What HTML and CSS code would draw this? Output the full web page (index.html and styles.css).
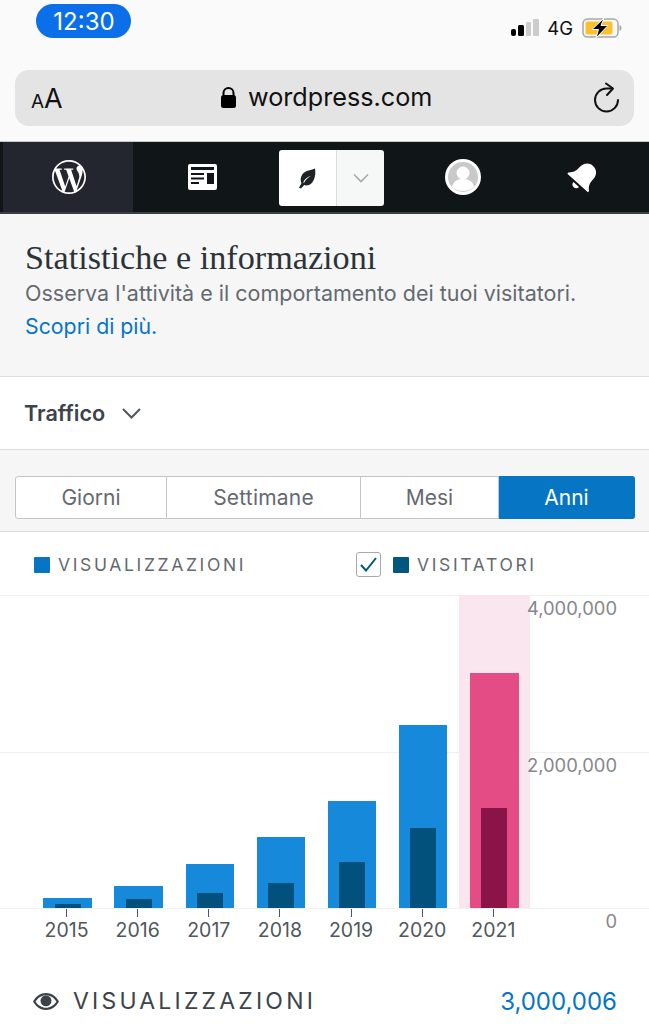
FILE: index.html
```html
<!DOCTYPE html>
<html lang="it">
<head>
<meta charset="utf-8">
<title>Statistiche e informazioni</title>
<link rel="stylesheet" href="styles.css">
</head>
<body>
<header class="chrome">
  <div class="status">
    <span class="time">12:30</span>
    <div class="status-right">
      <svg class="signal" width="28" height="18" viewBox="0 0 28 18"><rect x="0" y="10" width="5" height="7" rx="2" fill="#000"/><rect x="7" y="6" width="6" height="11" rx="1.500" fill="#000"/><rect x="15" y="3" width="5" height="14" rx="1" fill="#ccc"/><rect x="22" y="0" width="6" height="17" rx="1" fill="#ccc"/></svg>
      <span class="net">4G</span>
      <svg class="battery" width="40" height="20" viewBox="0 0 40 20"><rect x="1" y="1" width="35" height="18" rx="4.500" fill="none" stroke="#a8a8a8" stroke-width="1.500"/><rect x="3.500" y="3.500" width="27" height="13" rx="2" fill="#fbc02d"/><path d="M37.500 7v6c1.300-.4 2-1.500 2-3s-.7-2.600-2-3z" fill="#a8a8a8"/><path d="M22 0 10 11.500h6.500L14 20 26 7.500h-7z" fill="#000" stroke="#fafafa" stroke-width="1"/></svg>
    </div>
  </div>
  <div class="urlbar">
    <span class="aa"><span class="aa-small">A</span>A</span>
    <span class="domain">
      <svg class="lock" width="15" height="21" viewBox="0 0 15 21"><path d="M2.500 9V6a5 5 0 0 1 10 0v3" fill="none" stroke="#000" stroke-width="2"/><rect x="0" y="8" width="15" height="13" rx="2.500" fill="#000"/></svg>
      wordpress.com
    </span>
    <svg class="reload" width="27" height="32" viewBox="0 0 27 32"><path d="M18 6.500H12.500A11.500 11.500 0 1 0 24 18" fill="none" stroke="#111" stroke-width="2" stroke-linecap="round"/><path d="M12 1.500 19 6.500 13 13" fill="none" stroke="#111" stroke-width="2" stroke-linecap="round" stroke-linejoin="round"/></svg>
  </div>
</header>

<nav class="topnav">
  <div class="nav-item nav-active">
    <svg width="34" height="34" viewBox="2 2 20 20"><path fill="#fff" d="M12 2C6.486 2 2 6.486 2 12s4.486 10 10 10 10-4.486 10-10S17.514 2 12 2zM3.010 12c0-1.302.28-2.540.78-3.660l4.290 11.760C5.080 18.640 3.010 15.560 3.010 12zm8.990 8.990c-.88 0-1.730-.13-2.540-.37l2.700-7.840 2.760 7.570c.02.04.04.09.06.12-.93.33-1.930.52-2.980.52zm1.240-13.200c.54-.03 1.030-.09 1.030-.09.48-.06.43-.77-.06-.74 0 0-1.460.11-2.400.11-.88 0-2.370-.11-2.370-.11-.48-.03-.54.71-.06.74 0 0 .46.06.95.09l1.410 3.870-1.980 5.940-3.300-9.810c.55-.03 1.040-.09 1.040-.09.49-.06.43-.77-.06-.74 0 0-1.460.11-2.400.11-.17 0-.37 0-.58-.01C6.070 4.430 8.870 3.010 12 3.010c2.340 0 4.460.89 6.060 2.350-.04 0-.08-.01-.12-.01-.88 0-1.510.77-1.510 1.600 0 .74.43 1.370.88 2.110.34.6.74 1.370.74 2.480 0 .77-.3 1.660-.69 2.910l-.9 3.010-3.220-9.670zm3.280 11.990 2.750-7.950c.51-1.280.68-2.300.68-3.210 0-.33-.02-.64-.06-.92.7 1.290 1.100 2.760 1.100 4.320 0 3.320-1.800 6.210-4.470 7.760z"/></svg>
  </div>
  <div class="nav-item nav-reader">
    <svg width="29" height="26" viewBox="0 0 29 26"><path fill="#fff" fill-rule="evenodd" d="M2 0h25a2 2 0 0 1 2 2v22a2 2 0 0 1-2 2H2a2 2 0 0 1-2-2V2a2 2 0 0 1 2-2zM3 3v3h23V3zM3 9v2h13V9zM3 13.500v2h13v-2zM3 18v2h8v-2zM19 9v11h7V9z"/></svg>
  </div>
  <div class="site-btn">
    <span class="site-main">
      <svg class="leaf" width="18" height="21" viewBox="0 0 18 21"><path fill="#1d2327" fill-rule="evenodd" d="M17 .5c1 5.800-.3 11.600-3.500 14.700-2.300 2.200-4.800 2.700-7.300 1.900L3 20.500 1 19.700l2.500-4.500C1.800 11.500 3 6.800 6.500 4.200 9.500 2.200 13.500 2 17 .5zM6 15c1.600-3 3.800-5.200 7-7.200-3.600 1-6.300 3.400-7.800 6.600z"/></svg>
    </span>
    <span class="site-more">
      <svg width="16" height="10" viewBox="0 0 16 10"><path d="M1 1.500 8 8.500 15 1.500" fill="none" stroke="#a7aaad" stroke-width="1.600"/></svg>
    </span>
  </div>
  <div class="nav-item nav-me">
    <svg width="36" height="36" viewBox="0 0 36 36"><circle cx="18" cy="18" r="18" fill="#fff"/><circle cx="18" cy="18" r="15" fill="#c9c9c9"/><circle cx="18" cy="14" r="6.500" fill="#fff"/><path d="M7 28c1-5.500 5-8 11-8s10 2.500 11 8c-3 2.400-6.800 4-11 4s-8-1.600-11-4z" fill="#fff"/></svg>
  </div>
  <div class="nav-item nav-bell">
    <svg width="32" height="32" viewBox="0 0 30 30"><g fill="#fff" transform="rotate(42 15 15)"><path d="M15 1c5.500 0 8.500 4 8.500 9.500 0 5 1 7.500 4.500 10.500v1.500H2V21c3.500-3 4.500-5.500 4.500-10.500C6.500 5 9.500 1 15 1z"/><path d="M11.500 24.500h7c0 2.200-1.500 3.500-3.500 3.500s-3.500-1.300-3.500-3.500z"/></g></svg>
  </div>
</nav>

<section class="intro">
  <h1 class="title">Statistiche e informazioni</h1>
  <p class="sub">Osserva l'attività e il comportamento dei tuoi visitatori.</p>
  <a class="more" href="#">Scopri di più.</a>
</section>

<div class="traffic">
  <span>Traffico</span>
  <svg width="19" height="11" viewBox="0 0 19 11"><path d="M1 1 9.500 9.500 18 1" fill="none" stroke="#50575e" stroke-width="2"/></svg>
</div>

<div class="period">
  <div class="tabs">
    <span class="tab tab-days">Giorni</span>
    <span class="tab tab-weeks">Settimane</span>
    <span class="tab tab-months">Mesi</span>
    <span class="tab tab-years">Anni</span>
  </div>
</div>

<main class="panel">
  <div class="legend">
    <span class="key key-views"></span>
    <span class="legend-label legend-views">VISUALIZZAZIONI</span>
    <span class="check">
      <svg width="17" height="15" viewBox="0 0 17 15"><path d="M1 8 6 13.500 16 1" fill="none" stroke="#02577e" stroke-width="2"/></svg>
    </span>
    <span class="key key-visitors"></span>
    <span class="legend-label">VISITATORI</span>
  </div>

  <div class="chart">
    <div class="gridlines"><i></i><i></i><i></i></div>
    <div class="plot">
      <div class="col"><div class="bar" style="height:10px"><div class="inner" style="height:4px"></div></div></div>
      <div class="col"><div class="bar" style="height:22px"><div class="inner" style="height:9px"></div></div></div>
      <div class="col"><div class="bar" style="height:44px"><div class="inner" style="height:15px"></div></div></div>
      <div class="col"><div class="bar" style="height:71px"><div class="inner" style="height:25px"></div></div></div>
      <div class="col"><div class="bar" style="height:107px"><div class="inner" style="height:46px"></div></div></div>
      <div class="col"><div class="bar" style="height:183px"><div class="inner" style="height:80px"></div></div></div>
      <div class="col col-on"><div class="bar" style="height:235px"><div class="inner" style="height:100px"></div></div></div>
    </div>
    <div class="years">
      <span class="year">2015</span><span class="year">2016</span><span class="year">2017</span><span class="year">2018</span><span class="year">2019</span><span class="year">2020</span><span class="year">2021</span>
    </div>
    <div class="axis"><span>4,000,000</span><span>2,000,000</span><span>0</span></div>
  </div>

  <div class="total">
    <svg width="26" height="17" viewBox="0 0 26 17"><path fill="#3c434a" fill-rule="evenodd" d="M13 0c5.500 0 10.200 3.300 13 8.500C23.200 13.700 18.500 17 13 17S2.800 13.700 0 8.500C2.800 3.300 7.500 0 13 0zm0 2.200c-4.200 0-7.900 2.400-10.400 6.300 2.500 3.900 6.200 6.300 10.400 6.300s7.900-2.400 10.400-6.300C20.900 4.600 17.200 2.200 13 2.200z"/><circle cx="13" cy="7.800" r="5.500" fill="#3c434a"/></svg>
    <span class="total-label">VISUALIZZAZIONI</span>
    <span class="total-value">3,000,006</span>
  </div>
</main>
</body>
</html>
```

FILE: styles.css
```css
* { box-sizing: border-box; }
html, body { margin: 0; padding: 0; }
body {
  width: 649px;
  height: 1024px;
  overflow: hidden;
  background: #fff;
  font-family: Inter, "Liberation Sans", sans-serif;
  color: #50575e;
}

.chrome {
  height: 142px;
  background: #fafafa;
  border-bottom: 1px solid #c8c8c8;
  padding: 4px 15px 0;
}
.status {
  height: 66px;
  display: flex;
  justify-content: space-between;
  align-items: flex-start;
}
.time {
  width: 95px;
  height: 34px;
  margin-left: 21px;
  padding: 1px 0 0 1px;
  border-radius: 17px;
  background: #0a6fe8;
  color: #fff;
  font-size: 24px;
  line-height: 34px;
  text-align: center;
}
.status-right {
  display: flex;
  align-items: center;
  gap: 8px;
  margin-top: 14px;
  margin-right: 12px;
}
.net { font-size: 18.500px; line-height: 20px; color: #111; }
.battery { margin-left: 1px; }

.urlbar {
  height: 56px;
  border-radius: 14px;
  background: #e4e4e4;
  display: flex;
  align-items: center;
  padding: 0 13px 0 16px;
  color: #111;
}
.aa { width: 190px; font-size: 27px; line-height: 1; }
.aa-small { font-size: 19px; }
.domain {
  display: flex;
  align-items: center;
  gap: 12px;
  font-size: 25.200px;
  line-height: 30px;
  padding-bottom: 2px;
  flex: 1;
}

.topnav {
  height: 72px;
  background: #101517;
  border-bottom: 2px solid #3a3f44;
  display: flex;
  padding-left: 3px;
}
.nav-item { display: flex; align-items: center; justify-content: center; }
.nav-active { width: 130px; background: #23262e; padding-left: 1px; }
.nav-reader { width: 138px; }
.site-btn {
  width: 105px;
  height: 56px;
  margin: 8px 8px 0;
  display: flex;
  border-radius: 3px;
  overflow: hidden;
}
.site-main {
  width: 57px;
  background: #fff;
  display: flex;
  align-items: center;
  justify-content: center;
  padding-right: 2px;
}
.site-more {
  width: 48px;
  background: #f6f7f7;
  border-left: 1px solid #dcdcde;
  display: flex;
  align-items: center;
  justify-content: center;
}
.nav-me { width: 142px; }
.nav-bell { width: 98px; }

.intro {
  height: 162px;
  background: #f6f6f6;
  padding: 26px 25px 0;
}
.title {
  margin: 0;
  font-family: "Liberation Serif", serif;
  font-weight: 400;
  font-size: 34.200px;
  line-height: 36px;
  color: #2c3338;
}
.sub {
  margin: 0;
  font-size: 21.500px;
  line-height: 34px;
  color: #646970;
}
.more {
  display: block;
  font-size: 21.300px;
  line-height: 32px;
  color: #0675c4;
  text-decoration: none;
}

.traffic {
  height: 74px;
  background: #fff;
  border-top: 1.500px solid #dcdcde;
  border-bottom: 1.500px solid #dcdcde;
  display: flex;
  align-items: center;
  gap: 17px;
  padding-left: 24px;
  font-size: 21.600px;
  font-weight: 600;
  color: #3c434a;
}

.period {
  height: 82px;
  background: #f6f6f6;
  border-bottom: 1.500px solid #dcdcde;
  padding: 26px 14px 0 15px;
}
.tabs { display: flex; height: 43px; font-size: 21px; }
.tab {
  display: flex;
  align-items: center;
  justify-content: center;
  background: #fff;
  border: 1.500px solid #c3c4c7;
  border-left-width: 0;
  color: #646970;
}
.tab-days { width: 152px; border-left-width: 1.500px; border-radius: 3px 0 0 3px; }
.tab-weeks { width: 194px; letter-spacing: 0.200px; }
.tab-months { width: 138px; }
.tab-years {
  width: 136px;
  background: #0675c4;
  border-color: #0675c4;
  color: #fff;
  border-radius: 0 3px 3px 0;
}

.legend {
  height: 63px;
  display: flex;
  align-items: center;
  padding: 2px 0 0 34px;
  font-size: 17.500px;
  letter-spacing: 2.650px;
  color: #646970;
}
.key { width: 16px; height: 16px; border-radius: 1px; }
.key-views { background: #0675c4; }
.key-visitors { background: #02577e; margin-right: 8px; }
.legend-label { line-height: 1; }
.legend-views { width: 298px; margin-left: 8px; }
.check {
  width: 25px;
  height: 25px;
  margin-right: 12px;
  background: #fff;
  border: 1.500px solid #a7aaad;
  border-radius: 3px;
  display: flex;
  align-items: center;
  justify-content: center;
}

.chart { position: relative; height: 390px; }
.gridlines {
  position: absolute;
  inset: 0 0 auto 0;
  height: 314px;
  display: flex;
  flex-direction: column;
  justify-content: space-between;
}
.gridlines i { display: block; height: 1px; background: #f0f0f1; }
.plot {
  position: relative;
  height: 313px;
  padding-left: 32px;
  display: grid;
  grid-template-columns: repeat(7, 71.140px);
}
.col {
  display: flex;
  align-items: flex-end;
  justify-content: center;
}
.col-on { background: #f9e6ee; }
.bar {
  width: 48.500px;
  background: #1689db;
  display: flex;
  align-items: flex-end;
  justify-content: center;
}
.inner { width: 26px; background: #02507c; }
.col-on .bar { background: #e34c84; }
.col-on .inner { background: #8a1448; }

.years {
  padding-left: 31px;
  display: grid;
  grid-template-columns: repeat(7, 71.140px);
}
.year {
  text-align: center;
  font-size: 19.500px;
  line-height: 24px;
  padding-top: 10px;
  color: #50575e;
  background: linear-gradient(#50575e, #50575e) center 1px / 1px 8px no-repeat;
}

.axis {
  position: absolute;
  top: 0;
  right: 32px;
  height: 338px;
  padding-top: 1px;
  display: flex;
  flex-direction: column;
  justify-content: space-between;
  align-items: flex-end;
  font-size: 18.400px;
  line-height: 24px;
  color: #85878b;
}

.total {
  display: flex;
  align-items: center;
  height: 32px;
  padding: 0 32px 0 33px;
}
.total-label {
  flex: 1;
  margin-left: 14px;
  font-size: 23px;
  letter-spacing: 3.200px;
  color: #3c434a;
}
.total-value { font-size: 24px; color: #0675c4; }
```
